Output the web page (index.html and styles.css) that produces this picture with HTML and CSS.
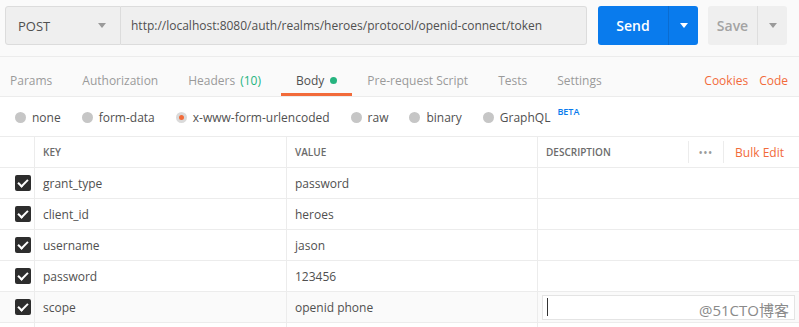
FILE: index.html
```html
<!DOCTYPE html>
<html lang="en">
<head>
  <meta charset="UTF-8">
  <title>Request - Body</title>
  <link rel="stylesheet" href="styles.css">
</head>
<body>

  <div class="url-bar">
    <div class="method">
      <span>POST</span>
      <span class="caret"></span>
    </div>
    <div class="url">http://localhost:8080/auth/realms/heroes/protocol/openid-connect/token</div>
    <div class="send-btn">
      <span class="label">Send</span>
      <span class="split"><span class="caret white"></span></span>
    </div>
    <div class="save-btn">
      <span class="label">Save</span>
      <span class="split"><span class="caret"></span></span>
    </div>
  </div>

  <div class="tabs">
    <span class="tab">Params</span>
    <span class="tab">Authorization</span>
    <span class="tab headers">Headers <span class="count">(10)</span></span>
    <span class="tab active">Body <span class="dot"></span></span>
    <span class="tab">Pre-request Script</span>
    <span class="tab">Tests</span>
    <span class="tab">Settings</span>
    <span class="tab-links">
      <span>Cookies</span>
      <span>Code</span>
    </span>
  </div>

  <div class="body-types">
    <label class="radio"><span class="circle"></span>none</label>
    <label class="radio"><span class="circle"></span>form-data</label>
    <label class="radio"><span class="circle on"></span>x-www-form-urlencoded</label>
    <label class="radio"><span class="circle"></span>raw</label>
    <label class="radio"><span class="circle"></span>binary</label>
    <label class="radio"><span class="circle"></span>GraphQL<sup class="beta">BETA</sup></label>
  </div>

  <div class="kv-table">
    <div class="row head">
      <div class="cell check"></div>
      <div class="cell">KEY</div>
      <div class="cell">VALUE</div>
      <div class="cell desc-head">
        <span>DESCRIPTION</span>
        <span class="more">•••</span>
        <span class="bulk">Bulk Edit</span>
      </div>
    </div>

    <div class="row">
      <div class="cell check"><span class="box"></span></div>
      <div class="cell">grant_type</div>
      <div class="cell">password</div>
      <div class="cell"></div>
    </div>
    <div class="row">
      <div class="cell check"><span class="box"></span></div>
      <div class="cell">client_id</div>
      <div class="cell">heroes</div>
      <div class="cell"></div>
    </div>
    <div class="row">
      <div class="cell check"><span class="box"></span></div>
      <div class="cell">username</div>
      <div class="cell">jason</div>
      <div class="cell"></div>
    </div>
    <div class="row">
      <div class="cell check"><span class="box"></span></div>
      <div class="cell">password</div>
      <div class="cell">123456</div>
      <div class="cell"></div>
    </div>
    <div class="row hover">
      <div class="cell check"><span class="box"></span></div>
      <div class="cell">scope</div>
      <div class="cell">openid phone</div>
      <div class="cell edit-cell">
        <div class="desc-input"><span class="cursor"></span><span class="watermark">@51CTO博客</span></div>
      </div>
    </div>
    <div class="row stub">
      <div class="cell check"></div>
      <div class="cell"></div>
      <div class="cell"></div>
      <div class="cell"></div>
    </div>
  </div>

</body>
</html>
```

FILE: styles.css
```css
* {
  box-sizing: border-box;
}

html, body {
  height: 327px;
  overflow: hidden;
}

body {
  margin: 0;
  font-family: 'Open Sans', 'Noto Sans CJK SC', sans-serif;
  font-size: 12px;
  color: #505050;
  background: #fff;
}

/* top url bar */
.url-bar {
  display: flex;
  height: 57px;
  padding: 6px 12px 0 5px;
  background: #fafafa;
  border-bottom: 1px solid #ececec;
}
.method {
  display: flex;
  align-items: center;
  justify-content: space-between;
  width: 116px;
  height: 39px;
  padding: 0 14px 0 12px;
  background: #efefef;
  border: 1px solid #dcdcdc;
  border-radius: 3px 0 0 3px;
  font-size: 13px;
  color: #505050;
}
.url {
  flex: 1;
  display: flex;
  align-items: center;
  height: 39px;
  padding: 0 10px;
  background: #efefef;
  border: 1px solid #dcdcdc;
  border-left: none;
  border-radius: 0 3px 3px 0;
  font-size: 12px;
  color: #505050;
}
.caret {
  width: 0;
  height: 0;
  border-left: 4px solid transparent;
  border-right: 4px solid transparent;
  border-top: 5px solid #9a9a9a;
}
.caret.white {
  border-top-color: #fff;
}
.send-btn, .save-btn {
  display: flex;
  height: 39px;
  border-radius: 3px;
  font-size: 14px;
  font-weight: 600;
}
.send-btn {
  width: 100px;
  margin-left: 11px;
  background: #097bed;
  color: #fff;
}
.save-btn {
  width: 79px;
  margin-left: 10px;
  background: #efefef;
  color: #a3a3a3;
}
.send-btn .label, .save-btn .label {
  flex: 1;
  display: flex;
  align-items: center;
  justify-content: center;
}
.split {
  display: flex;
  align-items: center;
  justify-content: center;
  width: 30px;
}
.send-btn .split {
  border-left: 1px solid #0a6cd0;
}
.save-btn .split {
  border-left: 1px solid #dedede;
}

/* tabs */
.tabs {
  display: flex;
  align-items: stretch;
  height: 40px;
  background: #fafafa;
  border-bottom: 1px solid #ececec;
  font-size: 12px;
}
.tab {
  display: flex;
  align-items: center;
  gap: 5px;
  padding: 10px 15px 0;
  color: #9a9a9a;
  border-bottom: 3px solid transparent;
}
.tab:first-child {
  padding-left: 10px;
}
.tab.headers {
  padding-right: 20px;
}
.tab.active {
  gap: 6px;
  color: #505050;
  border-bottom-color: #f26b3a;
}
.count {
  color: #26b47f;
}
.dot {
  width: 7px;
  height: 7px;
  border-radius: 50%;
  background: #26b47f;
}
.tab-links {
  display: flex;
  align-items: center;
  gap: 11px;
  margin-left: auto;
  padding: 7px 11px 0 0;
  color: #f26b3a;
}

/* body type radios */
.body-types {
  display: flex;
  align-items: center;
  height: 39px;
  padding: 1px 0 0 15px;
  gap: 21px;
  font-size: 12px;
  color: #505050;
}
.radio {
  display: flex;
  align-items: center;
  gap: 6px;
}
.circle {
  width: 11px;
  height: 11px;
  border-radius: 50%;
  background: #c6c6c6;
}
.circle.on {
  background: #f26b3a;
  border: 3px solid #dadada;
}
.beta {
  align-self: flex-start;
  margin-left: 1px;
  margin-top: -4px;
  font-size: 9px;
  font-weight: 600;
  color: #097bed;
}

/* key/value table */
.kv-table {
  border-top: 1px solid #ececec;
}
.row {
  display: grid;
  grid-template-columns: 35px 252px 251px 1fr;
  height: 31px;
  border-bottom: 1px solid #ececec;
}
.row.head {
  font-size: 10px;
  font-weight: 600;
  color: #6b6b6b;
}
.row.hover {
  background: #fafafa;
}
.row.stub {
  height: 10px;
  border-bottom: none;
}
.cell {
  display: flex;
  align-items: center;
  padding-left: 8px;
  border-right: 1px solid #ececec;
}
.cell:last-child {
  border-right: none;
}
.cell.check {
  padding-left: 15px;
}
.box {
  position: relative;
  width: 16px;
  height: 16px;
  border-radius: 2px;
  background: #2d2d2d;
}
.box::after {
  content: "";
  position: absolute;
  left: 5px;
  top: 2px;
  width: 4px;
  height: 8px;
  border-right: 2px solid #fff;
  border-bottom: 2px solid #fff;
  transform: rotate(45deg);
}
.desc-head {
  padding-right: 15px;
}
.desc-head .more {
  margin-left: auto;
  padding: 0 10px;
  border-left: 1px solid #ececec;
  border-right: 1px solid #ececec;
  height: 22px;
  display: flex;
  align-items: center;
  letter-spacing: 1px;
  font-size: 10px;
  color: #9a9a9a;
}
.desc-head .bulk {
  margin-left: 11px;
  font-size: 12px;
  font-weight: 400;
  color: #f26b3a;
}
.edit-cell {
  padding: 2px 4px 2px 4px;
}
.desc-input {
  display: flex;
  align-items: center;
  justify-content: space-between;
  width: 100%;
  height: 25px;
  padding: 0 5px 0 4px;
  background: #fff;
  border: 1px solid #e4e4e4;
}
.cursor {
  width: 1px;
  height: 18px;
  background: #333;
}
.watermark {
  margin-top: 4px;
  font-size: 15px;
  color: #8a8a8a;
}
```
